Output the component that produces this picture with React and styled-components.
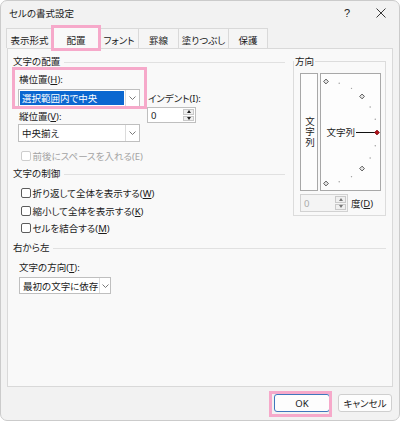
import React from "react"
import styled, { createGlobalStyle, css } from "styled-components"

const PINK = "#f6a9ca"
const FONT = `"Noto Sans", "Noto Sans CJK JP", sans-serif`

const GlobalStyle = createGlobalStyle`
  html, body {
    margin: 0;
    padding: 0;
    background: #ffffff;
  }
  body {
    font-family: ${FONT};
    font-size: 9.5px;
    color: #1b1b1b;
    font-feature-settings: "palt";
  }
`

const highlight = (inset) => css`
  position: relative;
  &::after {
    content: "";
    position: absolute;
    inset: ${inset};
    border: 3px solid ${PINK};
    pointer-events: none;
    z-index: 3;
  }
`

const Window = styled.div`
  width: 400px;
  height: 421px;
  box-sizing: border-box;
  border: 1px solid #cbcbcb;
  border-radius: 7px;
  background: #f2f2f2;
  display: flex;
  flex-direction: column;
  overflow: hidden;
`

const TitleBar = styled.div`
  display: flex;
  align-items: center;
  height: 23px;
  padding-left: 8px;
  flex: none;
`

const Title = styled.div`
  flex: 1;
`

const TitleButton = styled.div`
  width: ${p => p.$width}px;
  height: 23px;
  display: flex;
  align-items: center;
  justify-content: center;
  font-family: "Liberation Sans", sans-serif;
  font-size: 11px;
  color: #222;
`

const TabStrip = styled.div`
  display: flex;
  align-items: flex-end;
  height: 24px;
  padding-left: 5px;
  flex: none;
  position: relative;
  z-index: 2;
`

const Tab = styled.div`
  width: ${p => p.$width}px;
  height: ${p => (p.$active ? 23 : 20)}px;
  box-sizing: border-box;
  padding-top: 3px;
  display: flex;
  align-items: center;
  justify-content: center;
  border: 1px solid #d9d9d9;
  border-bottom: none;
  background: ${p => (p.$active ? "#f9f9f9" : "#f5f5f5")};
  margin-bottom: ${p => (p.$active ? -1 : 0)}px;
  & + & {
    margin-left: -1px;
  }
  ${p => p.$active && css`z-index: 2;`}
  ${p => p.$highlight && highlight("-2px")}
`

const Panel = styled.div`
  height: 339px;
  flex: none;
  box-sizing: border-box;
  margin: 0 6px;
  border: 1px solid #d9d9d9;
  background: #f9f9f9;
  padding: 6px 6px 0 5px;
`

const TopRow = styled.div`
  display: flex;
  align-items: flex-start;
  gap: 8px;
`

const LeftColumn = styled.div`
  width: 272px;
  display: flex;
  flex-direction: column;
`

const GroupHeader = styled.div`
  display: flex;
  align-items: center;
  height: 14px;
  line-height: 14px;
  margin-top: ${p => p.$top || 0}px;
  &::after {
    content: "";
    flex: 1;
    height: 1px;
    background: #e1e1e1;
    margin-left: 4px;
  }
`

const AlignmentRow = styled.div`
  display: flex;
  padding-left: 5px;
`

const FieldColumn = styled.div`
  width: 122px;
  display: flex;
  flex-direction: column;
`

const HighlightField = styled.div`
  display: flex;
  flex-direction: column;
  ${highlight("-2.5px -7px -2px -6px")}
`

const IndentColumn = styled.div`
  margin-left: 7px;
  padding-top: 22.5px;
  display: flex;
  flex-direction: column;
`

const FieldLabel = styled.div`
  height: 13px;
  line-height: 13px;
  margin-top: ${p => p.$top || 0}px;
  padding-left: ${p => p.$indent || 1}px;
  white-space: nowrap;
  u {
    text-decoration: underline;
    text-underline-offset: 1px;
  }
`

const Select = styled.div`
  display: flex;
  width: ${p => p.$width}px;
  height: ${p => p.$height || 18}px;
  box-sizing: border-box;
  margin-top: ${p => p.$top || 0}px;
  margin-left: ${p => p.$left || 0}px;
  border: 1px solid #bfbfbf;
  background: #ffffff;
`

const SelectValue = styled.div`
  flex: 1;
  display: flex;
  align-items: center;
  padding-left: 2px;
  margin: 1px;
  white-space: nowrap;
  ${p => p.$selected && css`
    background: #0b67d0;
    color: #ffffff;
  `}
`

const SelectArrow = styled.div`
  width: ${p => p.$width || 12}px;
  border-left: 1px solid #dcdcdc;
  display: flex;
  align-items: center;
  justify-content: center;
`

const Chevron = () => (
  <svg width="7" height="4" viewBox="0 0 7 4">
    <path d="M0.5 0.5 L3.5 3.5 L6.5 0.5" fill="none" stroke="#6a6a6a" strokeWidth="0.9" />
  </svg>
)

const SpinBox = styled.div`
  display: flex;
  width: ${p => p.$width}px;
  height: ${p => p.$height}px;
  box-sizing: border-box;
  margin-top: ${p => p.$top || 0}px;
  border: 1px solid ${p => (p.$disabled ? "#d2d2d2" : "#bfbfbf")};
  background: ${p => (p.$disabled ? "#f4f4f4" : "#ffffff")};
`

const SpinValue = styled.div`
  flex: 1;
  display: flex;
  align-items: center;
  padding-left: 3px;
  color: ${p => (p.$disabled ? "#ababab" : "inherit")};
`

const SpinButtons = styled.div`
  width: 11px;
  display: flex;
  flex-direction: column;
  gap: 1px;
  padding: 1px 1px 1px 0;
`

const SpinButton = styled.div`
  flex: 1;
  background: #efefef;
  border: 1px solid #c9c9c9;
  display: flex;
  align-items: center;
  justify-content: center;
  &::before {
    content: "";
    border-left: 2.5px solid transparent;
    border-right: 2.5px solid transparent;
    ${p => (p.$down
      ? css`border-top: 3px solid ${p.$disabled ? "#777" : "#222"};`
      : css`border-bottom: 3px solid ${p.$disabled ? "#777" : "#222"};`)}
  }
`

const CheckRow = styled.label`
  display: flex;
  align-items: center;
  gap: 2px;
  height: ${p => p.$height || 17.5}px;
  margin-top: ${p => p.$top || 0}px;
  padding-left: 7.5px;
  color: ${p => (p.$disabled ? "#a3a3a3" : "inherit")};
  white-space: nowrap;
`

const CheckText = styled.span`
  u {
    text-decoration: underline;
    text-underline-offset: 1px;
  }
`

const CheckBox = styled.span`
  width: 10px;
  height: 10px;
  box-sizing: border-box;
  border: 1px solid ${p => (p.$disabled ? "#cdcdcd" : "#5c5c5c")};
  border-radius: 2px;
  background: #ffffff;
  flex: none;
`

const DirectionGroup = styled.fieldset`
  width: 93px;
  box-sizing: border-box;
  margin: 0;
  padding: 0 4px 3px 6px;
  border: 1px solid #dcdcdc;
  min-inline-size: 0;
`

const Legend = styled.legend`
  padding: 0 1px;
  margin-left: -6px;
  font-size: 9.5px;
  line-height: 13px;
`

const DirectionBody = styled.div`
  display: flex;
  gap: 2px;
  margin-top: 5px;
`

const OrientBox = styled.div`
  width: ${p => p.$width}px;
  height: 118px;
  box-sizing: border-box;
  border: 1px solid #a8a8a8;
  background: #fdfdfd;
`

const VerticalText = styled(OrientBox)`
  display: flex;
  align-items: center;
  justify-content: center;
  writing-mode: vertical-rl;
  text-orientation: upright;
  letter-spacing: 0.6px;
`

const AngleRow = styled.div`
  display: flex;
  align-items: center;
  gap: 3px;
  margin-top: 3px;
  u {
    text-decoration: underline;
    text-underline-offset: 1px;
  }
`

const Footer = styled.div`
  display: flex;
  justify-content: flex-end;
  gap: 8px;
  padding: 7px 7px 0 0;
`

const Button = styled.div`
  width: ${p => p.$width}px;
  height: 18px;
  box-sizing: border-box;
  border: 1px solid ${p => (p.$primary ? "#3f77bd" : "#cfcfcf")};
  border-radius: 3px;
  background: #fdfdfd;
  display: flex;
  align-items: center;
  justify-content: center;
  ${p => p.$highlight && highlight("-4px -3px -6px -6px")}
`

const tabs = [
  { label: "表示形式", width: 47 },
  { label: "配置", width: 48, active: true },
  { label: "フォント", width: 40 },
  { label: "罫線", width: 41 },
  { label: "塗りつぶし", width: 51 },
  { label: "保護", width: 40 },
]

const Dial = () => {
  const cx = 5
  const cy = 58.5
  const r = 51
  const marks = []
  for (let a = -90; a <= 90; a += 15) {
    const rad = (a * Math.PI) / 180
    const x = cx + r * Math.cos(rad)
    const y = cy - r * Math.sin(rad)
    if (a % 45 === 0) {
      const s = 2.4
      const pts = `${x},${y - s} ${x + s},${y} ${x},${y + s} ${x - s},${y}`
      marks.push(
        <polygon
          key={a}
          points={pts}
          fill={a === 0 ? "#b3121b" : "#e6e6e6"}
          stroke={a === 0 ? "#7a0a10" : "#3a3a3a"}
          strokeWidth="0.8"
        />
      )
    } else {
      marks.push(<circle key={a} cx={x} cy={y} r="0.7" fill="#9a9a9a" />)
    }
  }
  return (
    <OrientBox $width={61}>
      <svg width="59" height="116" viewBox="0 0 59 116">
        <text x="5.5" y={cy + 3.4} fontSize="9.5" fill="#1b1b1b" fontFamily={FONT}>
          文字列
        </text>
        <line x1="35" y1={cy} x2="54" y2={cy} stroke="#111" strokeWidth="1" />
        {marks}
      </svg>
    </OrientBox>
  )
}

const Spin = ({ width, height, top, disabled }) => (
  <SpinBox $width={width} $height={height} $top={top} $disabled={disabled}>
    <SpinValue $disabled={disabled}>0</SpinValue>
    <SpinButtons>
      <SpinButton $disabled={disabled} />
      <SpinButton $down $disabled={disabled} />
    </SpinButtons>
  </SpinBox>
)

const Check = ({ children, disabled, top, height }) => (
  <CheckRow $disabled={disabled} $top={top} $height={height}>
    <CheckBox $disabled={disabled} />
    <CheckText>{children}</CheckText>
  </CheckRow>
)

const App = () => (
  <>
    <GlobalStyle />
    <Window>
      <TitleBar>
        <Title>セルの書式設定</Title>
        <TitleButton $width={32}>?</TitleButton>
        <TitleButton $width={36}>
          <svg width="10" height="10" viewBox="0 0 10 10">
            <path d="M0.5 0.5 L9.5 9.5 M9.5 0.5 L0.5 9.5" stroke="#222" strokeWidth="0.9" />
          </svg>
        </TitleButton>
      </TitleBar>

      <TabStrip>
        {tabs.map(t => (
          <Tab key={t.label} $width={t.width} $active={t.active} $highlight={t.active}>
            {t.label}
          </Tab>
        ))}
      </TabStrip>

      <Panel>
        <TopRow>
          <LeftColumn>
            <GroupHeader>文字の配置</GroupHeader>
            <AlignmentRow>
              <FieldColumn>
                <HighlightField>
                  <FieldLabel $top={3.5}>横位置(<u>H</u>):</FieldLabel>
                  <Select $width={122} $top={3.5}>
                    <SelectValue $selected>選択範囲内で中央</SelectValue>
                    <SelectArrow $width={13}><Chevron /></SelectArrow>
                  </Select>
                </HighlightField>
                <FieldLabel $top={2.5}>縦位置(<u>V</u>):</FieldLabel>
                <Select $width={122} $top={1.5}>
                  <SelectValue>中央揃え</SelectValue>
                  <SelectArrow $width={13}><Chevron /></SelectArrow>
                </Select>
              </FieldColumn>
              <IndentColumn>
                <FieldLabel>インデント(I):</FieldLabel>
                <Spin width={49} height={16} top={2.5} />
              </IndentColumn>
            </AlignmentRow>
            <Check disabled top={5} height={17}>前後にスペースを入れる(E)</Check>

            <GroupHeader $top={3}>文字の制御</GroupHeader>
            <Check top={3.5}>折り返して全体を表示する(<u>W</u>)</Check>
            <Check>縮小して全体を表示する(<u>K</u>)</Check>
            <Check>セルを結合する(<u>M</u>)</Check>
          </LeftColumn>

          <DirectionGroup>
            <Legend>方向</Legend>
            <DirectionBody>
              <VerticalText $width={18}>文字列</VerticalText>
              <Dial />
            </DirectionBody>
            <AngleRow>
              <Spin width={48} height={18} disabled />
              <span>度(<u>D</u>)</span>
            </AngleRow>
          </DirectionGroup>
        </TopRow>

        <GroupHeader $top={4}>右から左</GroupHeader>
        <FieldLabel $top={5.5} $indent={6}>文字の方向(<u>T</u>):</FieldLabel>
        <Select $width={92} $height={17} $top={3.5} $left={6}>
          <SelectValue>最初の文字に依存</SelectValue>
          <SelectArrow $width={11}><Chevron /></SelectArrow>
        </Select>
      </Panel>

      <Footer>
        <Button $width={56} $primary $highlight>OK</Button>
        <Button $width={54}>キャンセル</Button>
      </Footer>
    </Window>
  </>
)

export default App
